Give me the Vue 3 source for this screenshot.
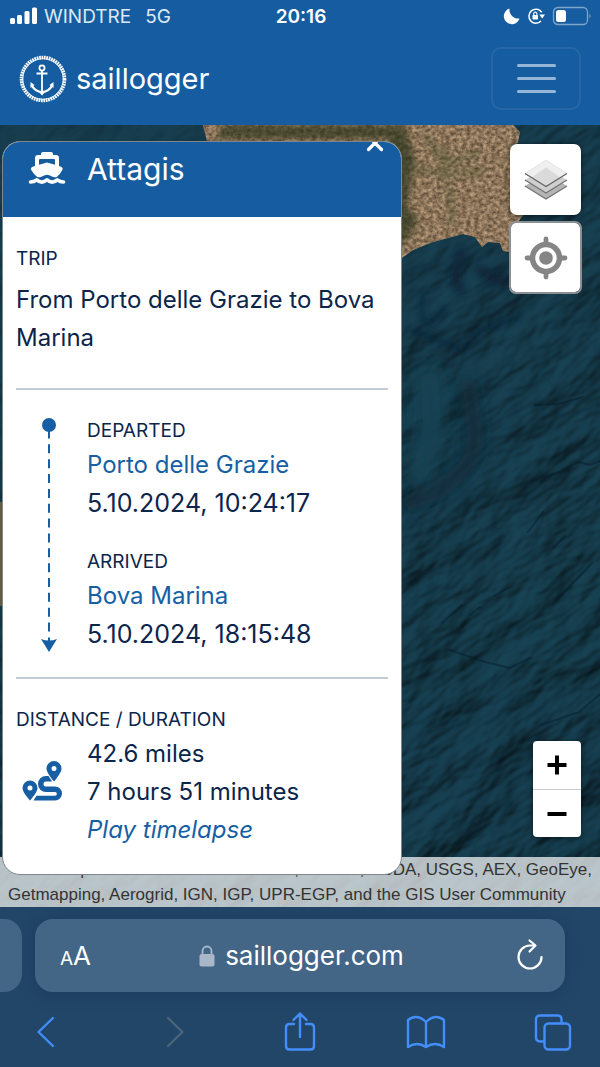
<script setup>
const stops = [
  { label: 'Departed', place: 'Porto delle Grazie', time: '5.10.2024, 10:24:17' },
  { label: 'Arrived', place: 'Bova Marina', time: '5.10.2024, 18:15:48' },
]
</script>

<template>
  <div class="screen">
    <header class="top">
      <div class="status">
        <div class="status-side">
          <svg class="signal" viewBox="0 0 27 18" width="27" height="18" fill="#fff">
            <rect x="0" y="11" width="5" height="6" rx="1.5" />
            <rect x="7" y="8" width="5" height="9" rx="1.5" />
            <rect x="14.5" y="4" width="5" height="13" rx="1.5" />
            <rect x="22" y="0.5" width="5" height="16.5" rx="1.5" />
          </svg>
          <span>WINDTRE</span>
          <span class="network">5G</span>
        </div>
        <span class="clock">20:16</span>
        <div class="status-side status-end">
          <svg viewBox="0 0 16 16" width="16" height="16" fill="#fff">
            <path d="M5.500 .5A8 8 0 1 0 15.500 10.500 8.800 8.800 0 0 1 5.500 .5Z" />
          </svg>
          <svg viewBox="0 0 18 18" width="18" height="18" fill="none" stroke="#fff" stroke-width="1.5">
            <path d="M14.700 5.200A7 7 0 1 0 14 14" />
            <path d="M12.300 7.500h5.700l-2.800 4Z" fill="#fff" stroke="none" />
            <rect x="5.500" y="8" width="5.500" height="4.500" rx=".8" fill="#fff" stroke="none" />
            <path d="M6.700 8V6.700a1.600 1.600 0 0 1 3.200 0V8" stroke-width="1.100" />
          </svg>
          <svg viewBox="0 0 40 20" width="40" height="20">
            <rect x="1.500" y="1.500" width="34" height="17" rx="4.500" fill="none" stroke="#fff" stroke-opacity=".45" stroke-width="1.300" />
            <rect x="4" y="4" width="10" height="12" rx="2.500" fill="#fff" />
            <path d="M37.500 7.500q2 2.500 0 5Z" fill="#fff" fill-opacity=".5" />
          </svg>
        </div>
      </div>
      <nav class="navbar">
        <a class="brand" href="#">
          <svg viewBox="0 0 48 48" width="48" height="48" fill="none" stroke="#fff">
            <circle cx="24" cy="24" r="21.500" stroke-width="3.600" stroke-dasharray="1.700 .72" />
            <circle cx="24" cy="24" r="20.300" stroke-width=".8" />
            <circle cx="23" cy="13" r="2.600" stroke-width="1.700" />
            <path d="M23 15.500V38M17.500 18.500h11" stroke-width="1.800" />
            <path d="M12.500 30Q16 36.500 23 37.200 30 36.500 33.500 30" stroke-width="2.200" />
            <path d="M11.500 27v6l4-3ZM34.500 27v6l-4-3ZM19.500 36.500 23 40.500l3.500-4Z" fill="#fff" stroke="none" />
          </svg>
          <span>saillogger</span>
        </a>
        <button class="menu" type="button" aria-label="Menu">
          <i></i><i></i><i></i>
        </button>
      </nav>
    </header>

    <main class="map">
      <svg class="terrain" viewBox="0 0 600 782" preserveAspectRatio="xMidYMid slice" aria-hidden="true">
        <defs>
          <linearGradient id="sea" x1="0" y1="0" x2="0" y2="1">
            <stop offset="0" stop-color="#173c4d" />
            <stop offset=".5" stop-color="#143747" />
            <stop offset="1" stop-color="#103140" />
          </linearGradient>
          <filter id="relief" x="0" y="0" width="100%" height="100%" color-interpolation-filters="sRGB">
            <feTurbulence type="fractalNoise" baseFrequency=".012 .024" numOctaves="4" seed="8" />
            <feDiffuseLighting surfaceScale="9" diffuseConstant="1.200" lighting-color="#153a49">
              <feDistantLight azimuth="250" elevation="55" />
            </feDiffuseLighting>
          </filter>
          <filter id="soil" x="0" y="0" width="100%" height="100%" color-interpolation-filters="sRGB">
            <feTurbulence type="fractalNoise" baseFrequency=".24 .28" numOctaves="4" seed="5" />
            <feColorMatrix values=".9 0 0 0 .1  .8 0 0 0 .05  .7 0 0 0 0  0 0 0 0 1" />
          </filter>
          <filter id="soft" x="-50%" y="-20%" width="200%" height="140%"><feGaussianBlur stdDeviation="7" /></filter>
          <filter id="edge"><feGaussianBlur stdDeviation="3" /></filter>
          <linearGradient id="fade" x1="0" y1="0" x2=".8" y2="1">
            <stop offset=".25" stop-color="#fff" stop-opacity=".3" />
            <stop offset=".75" stop-color="#fff" stop-opacity=".85" />
          </linearGradient>
          <mask id="fadeMask"><rect width="600" height="782" fill="url(#fade)" /></mask>
          <clipPath id="coast">
            <path d="M203 0H513L520 7 518 17 510 30 512 70 525 88 517 98 509 127 503 126 500 118 488 117 482 122 475 112 463 109 433 117 413 125 395 138H206L207 16Z" />
          </clipPath>
        </defs>
        <rect width="600" height="782" fill="url(#sea)" />
        <g mask="url(#fadeMask)">
          <g transform="rotate(-35 300 391)"><rect x="-250" y="-160" width="1100" height="1100" filter="url(#relief)" /></g>
        </g>
        <g fill="none" stroke="#071f31" stroke-linecap="round" filter="url(#edge)" opacity=".65">
          <path d="M462 128Q450 150 460 165M480 145l25 14M490 152l22 3" stroke-width="10" />
          <path d="M423 170Q420 195 428 200L445 185M410 205Q440 215 462 225L480 205 520 192" stroke-width="4" />
        </g>
        <g fill="none" filter="url(#soft)">
          <path d="M426 245Q442 300 415 356" stroke="#184353" stroke-width="26" />
          <path d="M467 255Q478 310 472 330 460 360 405 380" stroke="#0a2735" stroke-width="17" opacity=".75" />
        </g>
        <g fill="none" stroke="#061c2b" stroke-width="2" stroke-linecap="round" opacity=".5">
          <path d="M535 280l23-1 25-7M600 336l-10 4-12-3-18 10-14 4-6 8M543 387l-15 20M565 411l-12 12M592 438l-19 20-17 18M508 463l-14 8M480 482l-10 8M462 480l-20 18M541 600l38-13 21-18M450 525l35 12 25 6 20-10" />
        </g>
        <g clip-path="url(#coast)">
          <rect x="200" width="330" height="145" fill="#917b5e" />
          <rect x="200" width="330" height="145" filter="url(#soil)" opacity=".65" />
          <path d="M225 0H405L415 35 407 80 418 95 405 118H390V14H215Z" fill="#29361a" opacity=".7" filter="url(#edge)" />
          <path d="M410 42Q440 52 485 45M445 20v35M450 60l2 40M425 10l20 28 35-10" fill="none" stroke="#505433" stroke-width="6" opacity=".5" filter="url(#edge)" />
        </g>
        <rect y="377" width="4" height="104" fill="#625b43" />
      </svg>

      <article class="card">
        <div class="card-head">
          <svg viewBox="0 0 36 33" width="36" height="33">
            <path fill="#fff" d="M14 0H22Q24 0 24 2V3H27Q30 3 30 6V14L32.500 15Q34.500 16 33.300 18 31 22.500 27.800 25 25 25.800 22.500 24.300 18 21.300 13.500 24.300 11 25.800 8.200 25 5 22.500 2.200 18 1.300 16 3 15L6 14V6Q6 3 9 3H12V2Q12 0 14 0ZM10 8V12.800L18 10.500 26 12.800V8Q26 7 25 7H11Q10 7 10 8Z" />
            <path d="M1.500 30Q5 30 7.700 27.800 13 32.500 18 27.800 23 32.500 28.300 27.800 31 30 34.500 30" fill="none" stroke="#fff" stroke-width="3.600" stroke-linecap="round" stroke-linejoin="round" />
          </svg>
          <h1>Attagis</h1>
          <button class="close" type="button" aria-label="Close">
            <svg viewBox="0 0 18 18" width="18" height="18" stroke="#fff" stroke-width="3.200" stroke-linecap="round"><path d="M2.500 2.500l13 13M15.500 2.500l-13 13" /></svg>
          </button>
        </div>
        <div class="card-body">
          <section>
            <h2>Trip</h2>
            <p class="route">From Porto delle Grazie to Bova Marina</p>
          </section>
          <section class="legs">
            <svg class="track" viewBox="0 0 16 234" width="16" height="234" fill="#165fa5">
              <circle cx="8" cy="7" r="7" />
              <path d="M8 7V224" stroke="#165fa5" stroke-width="2" stroke-dasharray="9 5.850" stroke-dashoffset="-4.500" />
              <path d="M8 10v9" stroke="#165fa5" stroke-width="2" />
              <path d="M0 221q8 3 16 0L8 234Z" />
            </svg>
            <div class="stops">
              <div v-for="stop in stops" :key="stop.label">
                <h2>{{ stop.label }}</h2>
                <p><a href="#">{{ stop.place }}</a></p>
                <p class="time">{{ stop.time }}</p>
              </div>
            </div>
          </section>
          <section>
            <h2>Distance / Duration</h2>
            <div class="totals">
              <svg viewBox="0 0 40 40" width="40" height="40">
                <g fill="#165fa5" fill-rule="evenodd">
                  <path d="M32 0a7.500 7.500 0 0 1 7.500 7.500C39.500 11 35.500 16.500 32 20.500 28.500 16.500 24.500 11 24.500 7.500A7.500 7.500 0 0 1 32 0Zm0 5a2.500 2.500 0 1 0 0 5 2.500 2.500 0 0 0 0-5Z" />
                  <path d="M8 19.500A7.500 7.500 0 0 1 15.500 27C15.500 30.500 11.500 35.500 8 39.500 4.500 35.500.5 30.500.5 27A7.500 7.500 0 0 1 8 19.500Zm0 5a2.500 2.500 0 1 0 0 5 2.500 2.500 0 0 0 0-5Z" />
                  <path d="M14.500 34.700H33a1.800 1.800 0 0 0 0-3.700H24a8 8 0 0 1 0-16h2.500l3.700 5.500H24a2.500 2.500 0 0 0 0 5h9a7 7 0 0 1 0 14H11.500Z" />
                </g>
              </svg>
              <div>
                <p>42.6 miles</p>
                <p>7 hours 51 minutes</p>
                <p><a class="play" href="#">Play timelapse</a></p>
              </div>
            </div>
          </section>
        </div>
      </article>

      <div class="controls">
        <div class="stack">
          <button class="tool" type="button" aria-label="Layers">
            <svg viewBox="0 0 44 42" width="44" height="42">
              <path d="M1 27 22 14l21 13-21 13Z" fill="#b5b5b5" />
              <path d="M1 27l21 13 21-13" fill="none" stroke="#747474" stroke-width="1.300" />
              <path d="M1 21 22 8l21 13-21 13Z" fill="#cfcfcf" />
              <path d="M1 21l21 13 21-13" fill="none" stroke="#747474" stroke-width="1.300" />
              <path d="M1 14.500 22 1l21 13.500L22 27.500Z" fill="#efefef" stroke="#ddd" stroke-width=".7" />
              <path d="M7.500 18.500 22 8.500l14.500 10L22 27.500Z" fill="#dadada" />
              <path d="M1 14.500l21 13 21-13" fill="none" stroke="#666" stroke-width="1.400" />
            </svg>
          </button>
          <button class="tool outlined" type="button" aria-label="Show my location">
            <svg viewBox="0 0 44 44" width="44" height="44">
              <circle cx="22" cy="22" r="13.500" fill="none" stroke="#858585" stroke-width="5.500" />
              <circle cx="22" cy="22" r="6.800" fill="#858585" />
              <path d="M22 3v5M22 36v5M3 22h5M36 22h5" stroke="#858585" stroke-width="4.800" stroke-linecap="round" />
            </svg>
          </button>
        </div>
        <div class="zoom">
          <button type="button" aria-label="Zoom in">
            <svg viewBox="0 0 20 20" width="20" height="20"><path d="M0.500 10h19M10 .5v19" stroke="#000" stroke-width="4" /></svg>
          </button>
          <button type="button" aria-label="Zoom out">
            <svg viewBox="0 0 20 20" width="20" height="20"><path d="M.5 10h19" stroke="#000" stroke-width="4" /></svg>
          </button>
        </div>
      </div>

      <p class="attribution">
        <span class="sources"><a href="#">Leaflet</a> | Tiles © Esri — Source: Esri, i-cubed, USDA, USGS, AEX, GeoEye,</span>
        <span>Getmapping, Aerogrid, IGN, IGP, UPR-EGP, and the GIS User Community</span>
      </p>
    </main>

    <footer class="browser">
      <div class="tabs">
        <div class="tab-peek"></div>
        <div class="address">
          <button class="text-size" type="button" aria-label="Page settings"><small>A</small>A</button>
          <button class="url" type="button">
            <svg viewBox="0 0 16 22" width="16" height="22">
              <rect x="0.500" y="9" width="15" height="12.500" rx="2" fill="#a9b7c9" />
              <path d="M3.500 9.500V6a4.500 4.500 0 0 1 9 0v3.500" fill="none" stroke="#a9b7c9" stroke-width="1.800" />
            </svg>
            <span>saillogger.com</span>
          </button>
          <button type="button" aria-label="Reload">
            <svg viewBox="0 0 26 30" width="26" height="30" fill="none" stroke="#fff" stroke-width="2.200" stroke-linecap="round" stroke-linejoin="round">
              <path d="M24.500 16A11.500 11.500 0 1 1 13 4.500h5M12.500 -.5l6 5-6 6" />
            </svg>
          </button>
        </div>
      </div>
      <div class="toolbar">
        <button type="button" aria-label="Back">
          <svg viewBox="0 0 36 40" width="36" height="40"><path d="M25 6 10.500 20 25 34" /></svg>
        </button>
        <button class="disabled" type="button" aria-label="Forward" disabled>
          <svg viewBox="0 0 36 40" width="36" height="40"><path d="M14 6l14.500 14L14 34" /></svg>
        </button>
        <button type="button" aria-label="Share">
          <svg viewBox="0 0 36 40" width="36" height="40"><path d="M14 12H9.500Q6 12 6 15.500V34q0 3.500 3.500 3.500h21Q34 37.500 34 34V15.500Q34 12 30.500 12H26M20 25V2M13.500 8 20 1.500 26.500 8" /></svg>
        </button>
        <button type="button" aria-label="Bookmarks">
          <svg viewBox="0 0 40 40" width="40" height="40"><path d="M21 10Q12 1 3 8V35q9-6 18 0 9-6 18 0V8Q30 1 21 10ZV35" /></svg>
        </button>
        <button type="button" aria-label="Tabs">
          <svg viewBox="0 0 36 40" width="36" height="40"><path d="M8.500 29.500H5Q1 29.500 1 25.500V7.500Q1 3.500 5 3.500H22.500q4 0 4 4V11" /><rect x="9.500" y="11.500" width="25.500" height="26" rx="4" /></svg>
        </button>
      </div>
    </footer>
  </div>
</template>

<style>
body {
  margin: 0;
}
</style>

<style scoped>
.screen {
  display: flex;
  flex-direction: column;
  min-height: 100vh;
  font-family: Inter, "Liberation Sans", sans-serif;
  color: #0b254b;
}
h1,
h2,
p {
  margin: 0;
  font-weight: 400;
}
a {
  color: #165fa5;
  text-decoration: none;
}
button {
  margin: 0;
  padding: 0;
  border: 0;
  background: none;
  color: inherit;
  font: inherit;
}
svg {
  display: block;
  flex: none;
  overflow: visible;
}
.top {
  background: #155da0;
  color: #fff;
}
.status {
  display: grid;
  grid-template-columns: 1fr auto 1fr;
  align-items: center;
  height: 32px;
  padding: 0 8px 0 10px;
  font-size: 19px;
}
.status-side {
  display: flex;
  align-items: center;
  gap: 7px;
  color: #dce8f4;
}
.network {
  margin-left: 7px;
}
.status-end {
  justify-content: flex-end;
}
.clock {
  font-weight: 600;
}
.navbar {
  display: flex;
  align-items: center;
  justify-content: space-between;
  padding: 15px 19px 15px;
}
.brand {
  display: flex;
  align-items: center;
  gap: 9px;
  color: #fff;
  font-size: 29px;
}
.menu {
  display: flex;
  flex-direction: column;
  align-items: center;
  justify-content: center;
  gap: 10px;
  box-sizing: border-box;
  width: 90px;
  height: 63px;
  border: 2px solid #2767a7;
  border-radius: 10px;
}
.menu i {
  width: 39px;
  height: 3px;
  border-radius: 2px;
  background: #96b6d8;
}
.map {
  position: relative;
  flex: 1;
  display: flex;
  align-items: stretch;
  justify-content: space-between;
  padding: 16px 18px 32px 2px;
  background: #12394a;
}
.terrain {
  position: absolute;
  inset: 0;
  width: 100%;
  height: 100%;
  overflow: hidden;
}
.card {
  position: relative;
  z-index: 2;
  box-sizing: border-box;
  width: 69%;
  overflow: hidden;
  border: 1px solid #80868a;
  border-radius: 18px;
  background: #fff;
}
.card-head {
  position: relative;
  display: flex;
  gap: 22px;
  padding: 10px 26px 30px;
  background: #155da0;
  color: #fff;
}
.card-head h1 {
  font-size: 30px;
  line-height: 35px;
}
.close {
  position: absolute;
  top: -8px;
  right: 17px;
}
.card-body {
  padding: 0 13px;
  font-size: 24px;
  line-height: 38px;
}
.card-body section {
  padding: 26px 0 24px;
}
.card-body section + section {
  border-top: 2px solid #c3cad8;
  padding-top: 25px;
}
h2 {
  font-size: 19px;
  line-height: 31px;
  text-transform: uppercase;
}
.route {
  padding: 7px 0;
}
.time {
  font-size: 25px;
}
.legs {
  display: flex;
  gap: 30px;
}
.card-body .legs {
  padding-left: 25px;
}
.track {
  margin-top: 3px;
}
.stops {
  display: grid;
  gap: 24px;
}
.totals {
  display: flex;
  align-items: flex-start;
  gap: 25px;
  padding-left: 6px;
}
.totals svg {
  margin-top: 26px;
}
.play {
  font-style: italic;
}
.controls {
  position: relative;
  z-index: 1;
  display: flex;
  flex-direction: column;
  align-items: flex-end;
  justify-content: space-between;
  padding: 3px 0 38px;
}
.stack {
  display: grid;
  justify-items: center;
  gap: 6px;
}
.tool {
  display: grid;
  place-items: center;
  box-sizing: border-box;
  width: 71px;
  height: 71px;
  border-radius: 7px;
  background: #fff;
  box-shadow: 0 1px 6px rgba(0, 0, 0, 0.55);
}
.outlined {
  width: 73px;
  height: 73px;
  border: 2px solid #8b9093;
  background-clip: padding-box;
  box-shadow: none;
}
.zoom {
  display: grid;
  overflow: hidden;
  margin-right: 1px;
  border-radius: 4px;
  background: #fff;
  box-shadow: 0 1px 6px rgba(0, 0, 0, 0.55);
}
.zoom button {
  display: grid;
  place-items: center;
  width: 48px;
  height: 48px;
}
.zoom button + button {
  border-top: 1px solid #ccc;
}
.attribution {
  position: absolute;
  right: 0;
  bottom: 0;
  left: 0;
  padding: 0 8px;
  background: rgba(255, 255, 255, 0.7);
  color: #333;
  font-family: "Liberation Sans", sans-serif;
  font-size: 17px;
  line-height: 25px;
}
.attribution span {
  display: block;
}
.attribution .sources {
  text-align: right;
}
.browser {
  padding: 12px 0 15px;
  background: #224668;
  color: #fff;
}
.tabs {
  display: flex;
  gap: 13px;
  padding-right: 35px;
}
.tab-peek {
  width: 22px;
  border-radius: 0 18px 18px 0;
  background: #436687;
}
.address {
  flex: 1;
  display: grid;
  grid-template-columns: 40px 1fr 40px;
  align-items: center;
  height: 73px;
  padding: 0 22px 0 25px;
  border-radius: 18px;
  background: #436687;
  box-shadow: 0 2px 16px rgba(20, 45, 80, 0.4);
}
.address > button:last-child {
  justify-self: end;
}
.text-size {
  text-align: left;
  font-size: 26px;
}
.text-size small {
  font-size: 19px;
}
.url {
  display: flex;
  align-items: center;
  justify-content: center;
  gap: 10px;
  font-size: 26px;
}
.toolbar {
  display: flex;
  justify-content: space-between;
  padding: 20px 29px 0 28px;
}
.toolbar svg {
  fill: none;
  stroke: #438efb;
  stroke-width: 2.4;
  stroke-linecap: round;
  stroke-linejoin: round;
}
.toolbar .disabled svg {
  stroke: #4e6478;
}
</style>
